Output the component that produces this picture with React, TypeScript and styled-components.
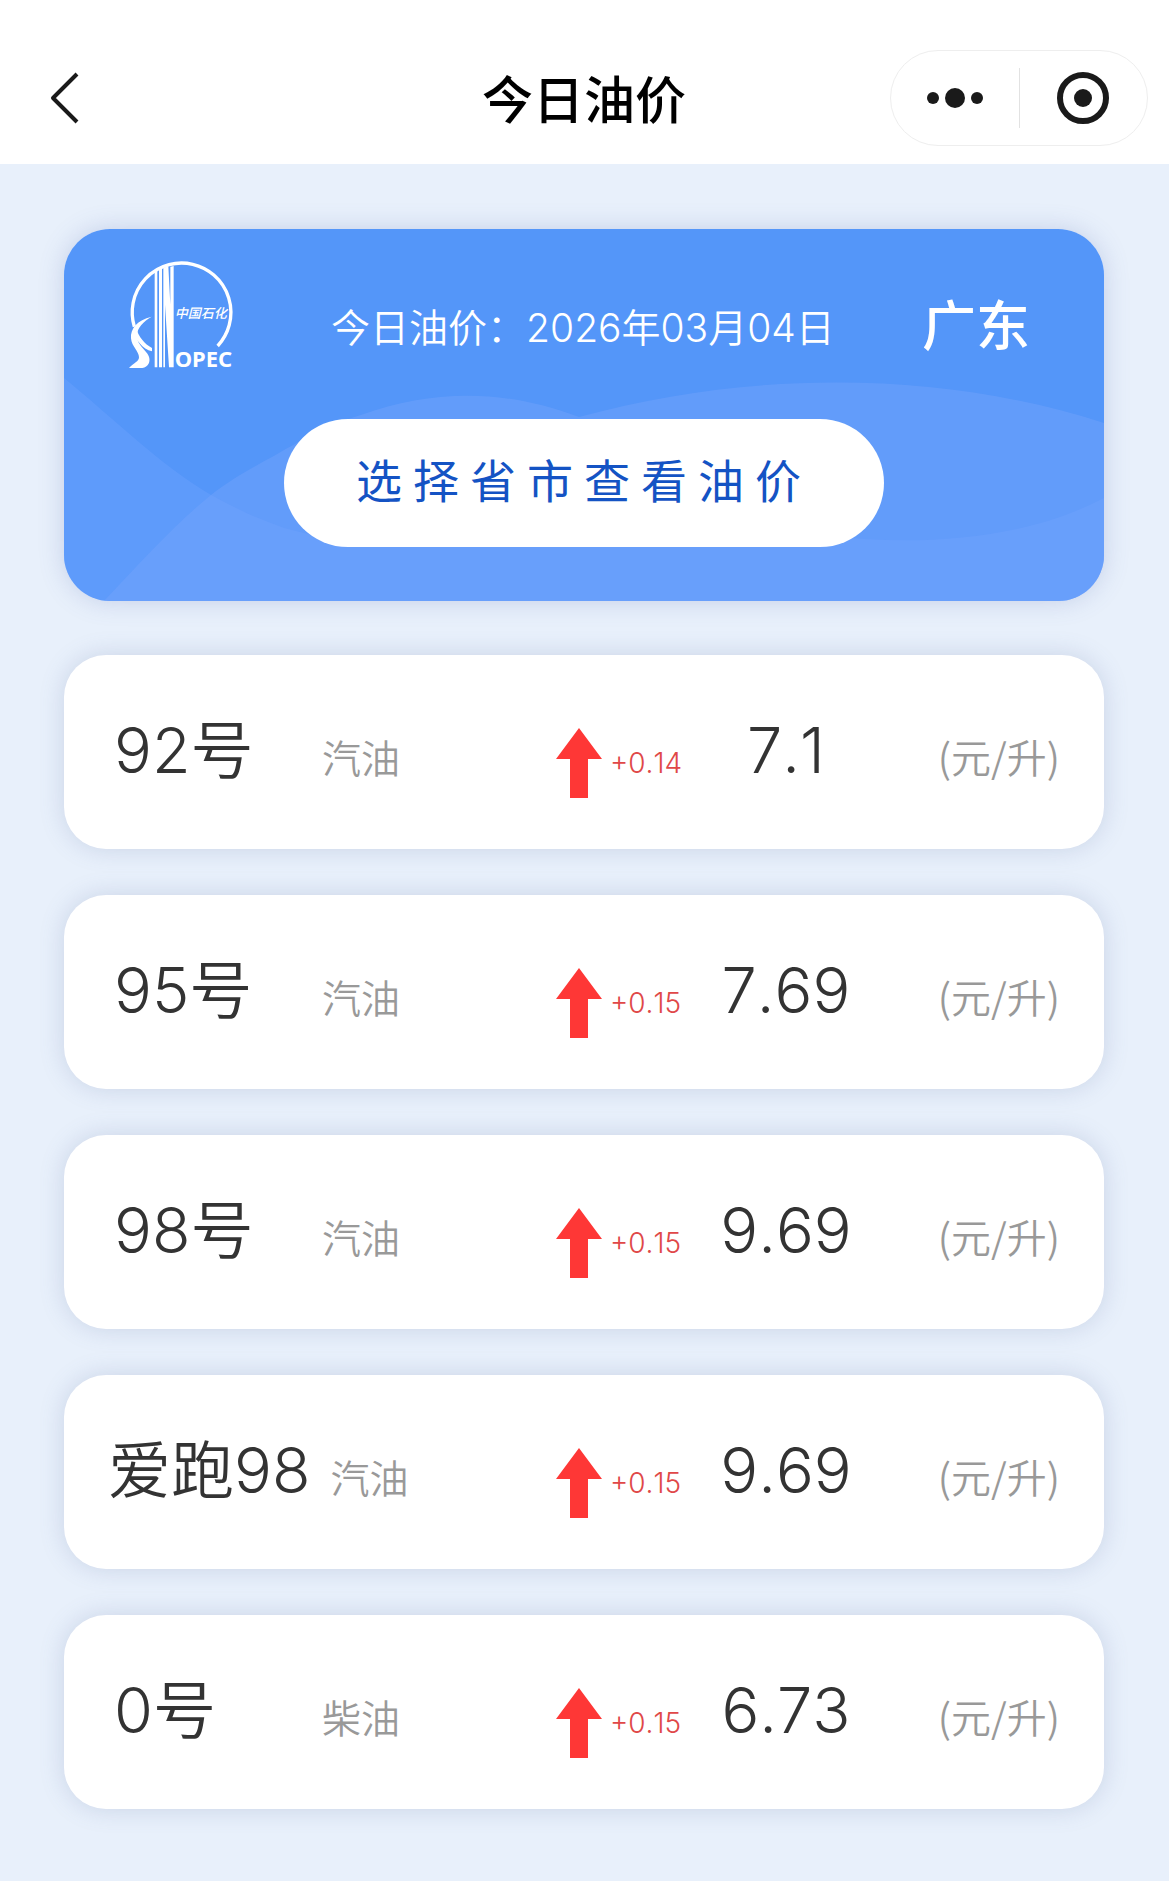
import React from "react";
import styled, { createGlobalStyle } from "styled-components";

const GlobalStyle = createGlobalStyle`
  *, *::before, *::after { box-sizing: border-box; }
  body {
    margin: 0;
    background: #e8f0fb;
    color: #333;
    font-family: Inter, "Noto Sans CJK SC", sans-serif;
    font-kerning: none;
  }
  h1, h2, p, ul { margin: 0; padding: 0; }
  button { font: inherit; border: 0; padding: 0; background: none; cursor: pointer; }
  svg { display: block; }
`;

const Header = styled.header`
  display: grid;
  grid-template-columns: 1fr auto 1fr;
  align-items: center;
  padding: 50px 21px 18px 20px;
  background: #fff;
`;

const BackButton = styled.button`
  justify-self: start;
  padding: 20px 28px;
`;

const Title = styled.h1`
  padding-top: 6px;
  color: #000;
  font-size: 51px;
  line-height: 72px;
  font-weight: 500;
`;

const Capsule = styled.div`
  justify-self: end;
  display: flex;
  align-items: center;
  width: 258px;
  height: 96px;
  border: 1px solid #eee;
  border-radius: 48px;
`;

const CapsuleButton = styled.button`
  flex: 1;
  display: flex;
  justify-content: center;
  align-items: center;
  height: 60px;

  & + & { border-left: 1px solid #e2e2e2; }
`;

const Main = styled.main`
  display: flex;
  flex-direction: column;
  gap: 54px;
  padding: 65px 65px 72px 64px;
`;

const Hero = styled.section`
  position: relative;
  display: flex;
  flex-direction: column;
  align-items: center;
  gap: 48px;
  padding: 30px 0 54px;
  overflow: hidden;
  border-radius: 46px;
  background: #5496f9;
`;

const HeroShadow = styled.div`
  border-radius: 46px;
  box-shadow: 0 0 24px rgba(90, 110, 180, 0.25);
`;

const Waves = styled.svg`
  position: absolute;
  inset: 0;
  width: 100%;
  height: 100%;
`;

const HeroTop = styled.div`
  position: relative;
  align-self: stretch;
  display: grid;
  grid-template-columns: 234fr 570fr 236fr;
  align-items: center;
  justify-items: center;
  height: 112px;
  color: #fff;
`;

const Logo = styled.svg`
  overflow: visible;
`;

const DateLine = styled.p`
  padding-top: 26px;
  font-size: 39px;
  line-height: 54px;
  font-weight: 350;
  white-space: nowrap;
`;

const Province = styled.h2`
  padding-top: 24px;
  justify-self: start;
  padding-left: 54px;
  font-size: 54px;
  line-height: 72px;
  font-weight: 500;
  white-space: nowrap;
`;

const PickButton = styled.button`
  position: relative;
  width: 600px;
  height: 128px;
  padding-bottom: 4px;
  border-radius: 64px;
  background: #fff;
  color: #1453c4;
  font-size: 46px;
  line-height: 64px;
  letter-spacing: 11px;
`;

const PriceList = styled.ul`
  display: flex;
  flex-direction: column;
  gap: 46px;
  list-style: none;
`;

const PriceRow = styled.li`
  display: grid;
  grid-template-columns: 492fr 130fr 200fr 218fr;
  align-items: baseline;
  padding: 50px 0 41px;
  border-radius: 42px;
  background: #fff;
  box-shadow: 0 0 24px rgba(90, 110, 160, 0.22);
  line-height: 90px;
  white-space: nowrap;
`;

const Fuel = styled.div<{ $long: boolean }>`
  display: flex;
  align-items: baseline;
  gap: ${(p) => (p.$long ? 20 : 0)}px;
  padding-left: ${(p) => (p.$long ? 44 : 50)}px;
`;

const FuelName = styled.h2<{ $long: boolean }>`
  min-width: ${(p) => (p.$long ? 0 : 208)}px;
  font-size: 63px;
  font-weight: 350;
`;

const Muted = styled.span`
  color: #999;
  font-size: 39px;
  font-weight: 350;
`;

const Trend = styled.div`
  display: flex;
  align-items: baseline;
  gap: 8px;
  color: #e04848;
  font-size: 28px;
  font-weight: 350;
`;

const TrendArrow = styled.svg`
  flex: none;
  align-self: center;
`;

const Price = styled.strong`
  justify-self: center;
  font-size: 63px;
  font-weight: 350;
`;

const Unit = styled(Muted)`
  justify-self: end;
  padding-right: 44px;
  font-family: "Noto Sans CJK SC", sans-serif;
  font-size: 40px;
`;

const SinopecLogo = () => (
  <Logo width="108" height="110" viewBox="52 56 324 330" role="img" aria-label="中国石化" fill="#fff">
    <path d="M74 256 A148 148 0 1 1 324 314" fill="none" stroke="#fff" strokeWidth="10" />
    <path d="M135 92 L143 87 V378 H135 Z M148 84 L157 80 V378 H148 Z M161 79 L176 75 L182 190 V76 L192 74 V378 H178 L166 190 V378 H161 Z" />
    <path d="M126 226 C82 236 62 262 64 291 C66 316 88 330 88 348 C88 360 72 366 58 380 H98 C116 378 124 360 117 344 C110 326 82 312 82 284 C82 258 102 240 126 226 Z" />
    <path d="M78 258 C88 288 104 308 127 320 V330 C98 322 78 296 70 268 Z" />
    <text x="195" y="378" fontFamily="Noto Sans, sans-serif" fontSize="66" fontWeight="700">OPEC</text>
    <text x="195" y="230" fontFamily="Noto Sans CJK SC, sans-serif" fontSize="39" fontStyle="italic" fontWeight="500">中国石化</text>
  </Logo>
);

const prices = [
  { name: "92号", type: "汽油", change: "+0.14", price: "7.1" },
  { name: "95号", type: "汽油", change: "+0.15", price: "7.69" },
  { name: "98号", type: "汽油", change: "+0.15", price: "9.69" },
  { name: "爱跑98", type: "汽油", change: "+0.15", price: "9.69" },
  { name: "0号", type: "柴油", change: "+0.15", price: "6.73" },
];

export default function App() {
  return (
    <>
      <GlobalStyle />
      <Header>
        <BackButton aria-label="返回">
          <svg width="32" height="54" viewBox="0 0 32 54" fill="none" stroke="#1a1a1a" strokeWidth="4">
            <path d="M29 3 L5 27 L29 51" strokeLinejoin="round" />
          </svg>
        </BackButton>
        <Title>今日油价</Title>
        <Capsule>
          <CapsuleButton aria-label="更多">
            <svg width="56" height="24" viewBox="0 0 56 24" fill="#1a1a1a">
              <circle cx="6" cy="12" r="6" />
              <circle cx="28" cy="12" r="10" />
              <circle cx="50" cy="12" r="6" />
            </svg>
          </CapsuleButton>
          <CapsuleButton aria-label="关闭">
            <svg width="52" height="52" viewBox="0 0 52 52" fill="#1a1a1a">
              <circle cx="26" cy="26" r="23" fill="none" stroke="#1a1a1a" strokeWidth="6" />
              <circle cx="26" cy="26" r="9" />
            </svg>
          </CapsuleButton>
        </Capsule>
      </Header>
      <Main>
        <HeroShadow>
          <Hero>
            <Waves viewBox="0 0 1040 372" preserveAspectRatio="none" aria-hidden="true">
              <path
                d="M0 149 C50 190 95 235 147 266 C180 284 200 292 220 299 C400 350 560 260 700 296 C800 318 940 322 1040 269 V372 H0 Z"
                fill="#6ea2ff"
                fillOpacity="0.42"
              />
              <path
                d="M40 372 C80 330 110 296 147 266 C170 248 190 238 215 224 C250 204 270 194 297 186 C370 160 440 160 515 188 C690 140 880 142 1040 194 V372 Z"
                fill="#78a6fc"
                fillOpacity="0.4"
              />
            </Waves>
            <HeroTop>
              <SinopecLogo />
              <DateLine>今日油价：2026年03月04日</DateLine>
              <Province>广东</Province>
            </HeroTop>
            <PickButton>选择省市查看油价</PickButton>
          </Hero>
        </HeroShadow>
        <PriceList>
          {prices.map((item) => {
            const long = item.name.length > 3;
            return (
              <PriceRow key={item.name}>
                <Fuel $long={long}>
                  <FuelName $long={long}>{item.name}</FuelName>
                  <Muted>{item.type}</Muted>
                </Fuel>
                <Trend>
                  <TrendArrow width="46" height="70" viewBox="0 0 46 70" fill="#fe3736" aria-hidden="true">
                    <path d="M23 0 L46 31 H32 V70 H14 V31 H0 Z" />
                  </TrendArrow>
                  {item.change}
                </Trend>
                <Price>{item.price}</Price>
                <Unit>(元/升)</Unit>
              </PriceRow>
            );
          })}
        </PriceList>
      </Main>
    </>
  );
}
